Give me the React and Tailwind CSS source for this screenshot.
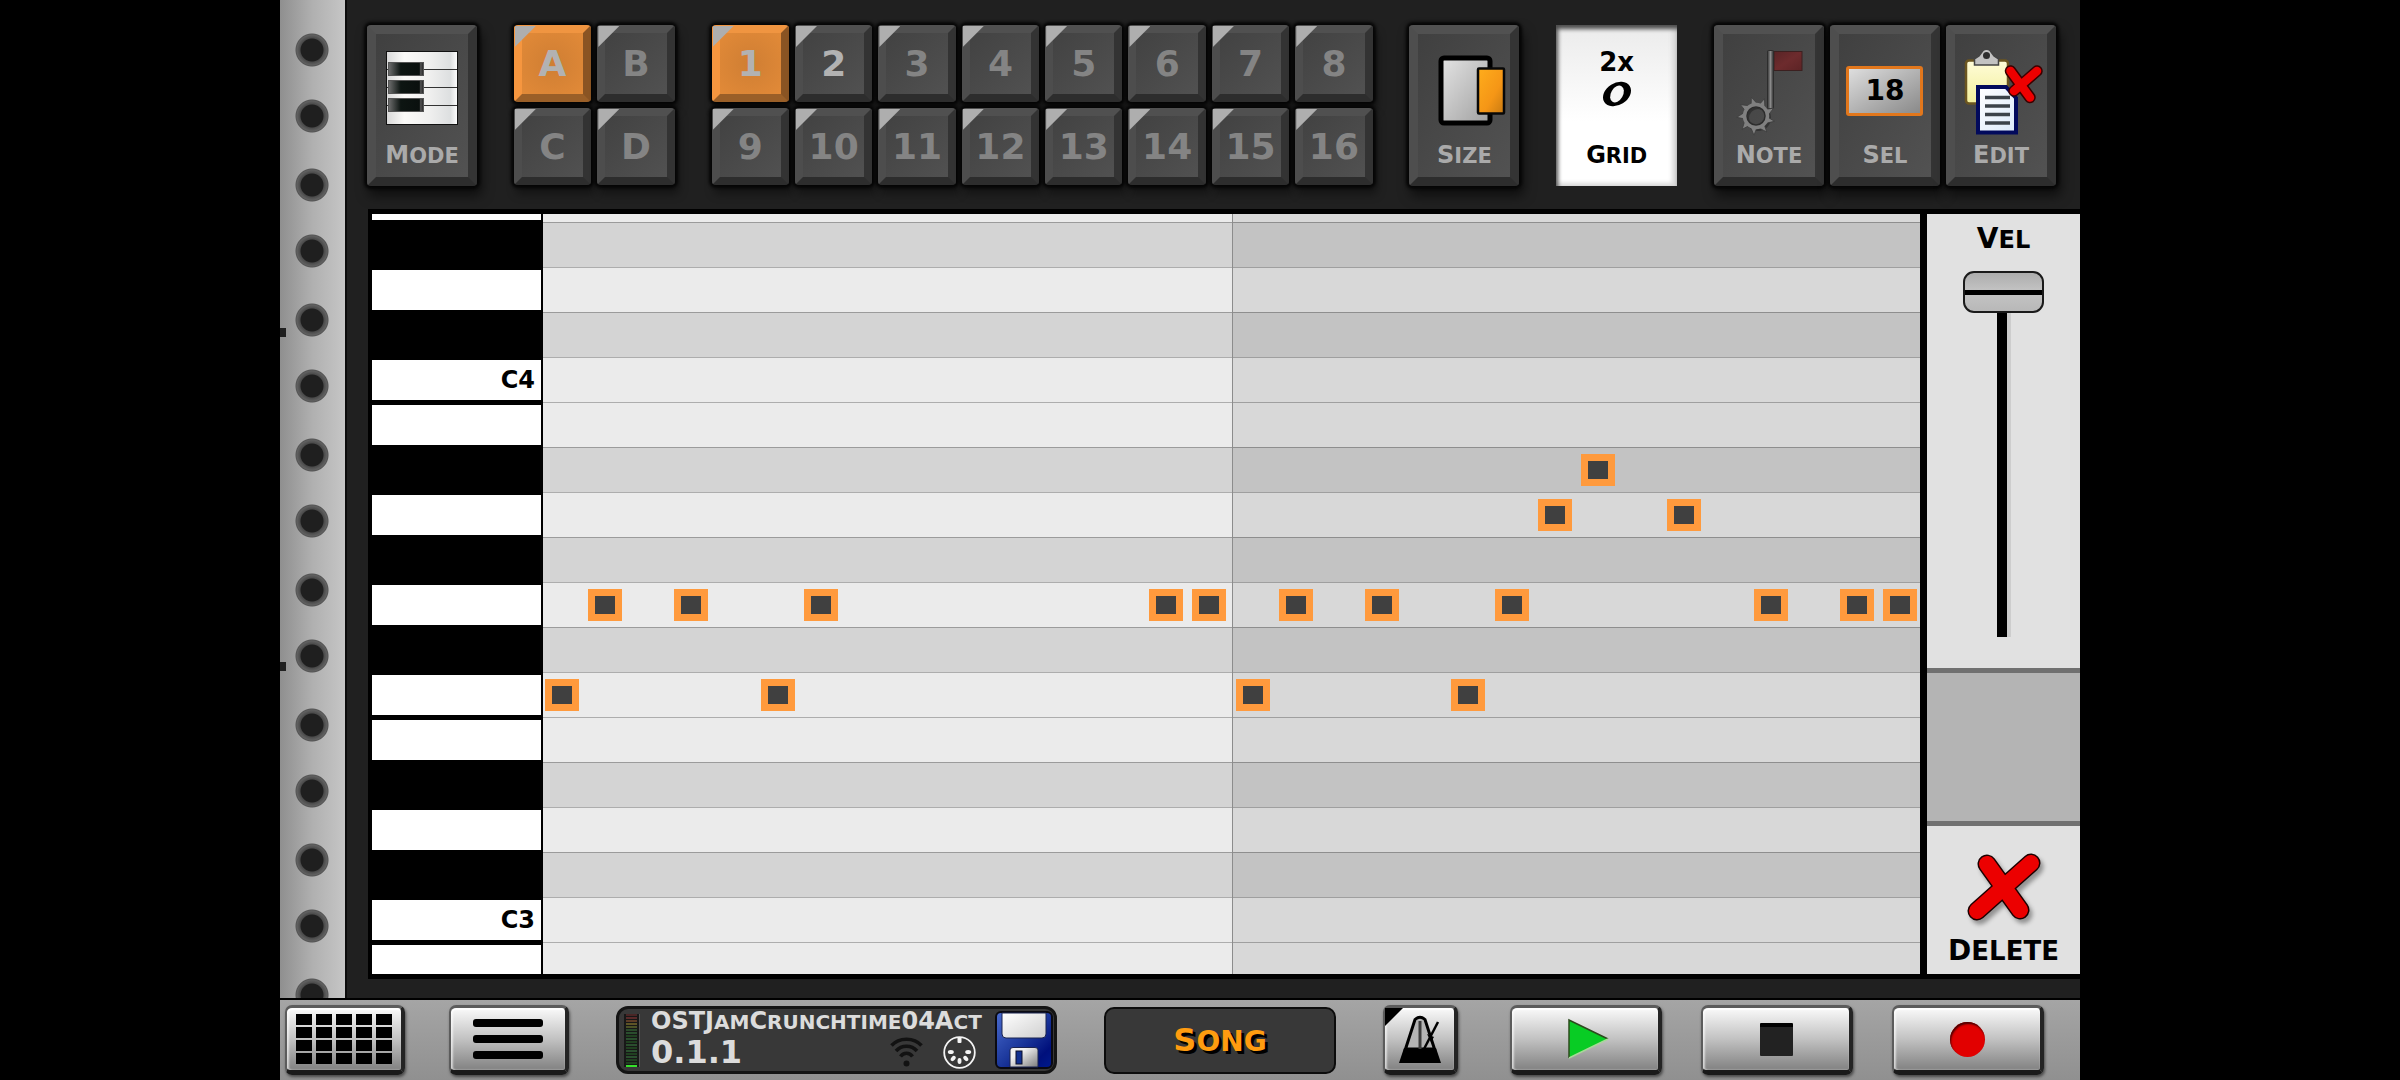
import React from "react";

/* Capitals at full size, lower-case letters as slightly smaller capitals. */
function Caps({ text, small }) {
  const runs = text.match(/[a-z]+|[^a-z]+/g) || [];
  return runs.map((run, i) =>
    /[a-z]/.test(run) ? (
      <span key={i} className={"uppercase leading-none " + small}>{run}</span>
    ) : (
      <span key={i}>{run}</span>
    )
  );
}

const BEVEL =
  "rounded-[4px] border-[9px] border-t-[#515151] border-l-[#4e4e4e] border-r-[#343434] border-b-[#2d2d2d] bg-linear-to-br from-[#404040] to-[#525252] shadow-[0_0_3px_3px_#060606,3px_8px_12px_2px_rgba(0,0,0,0.55)]";

function ToolButton({ label, children }) {
  return (
    <button type="button" className={"flex w-[110px] flex-col items-center pb-[10px] " + BEVEL}>
      <span className="flex h-[109px] w-[92px] items-center justify-center">{children}</span>
      <span className="text-[24px] leading-[24px] text-[#aaaaaa]">
        <Caps text={label} small="text-[21px]" />
      </span>
    </button>
  );
}

function Pad({ label, active, lit }) {
  const face = active
    ? "border-t-[#f09541] border-l-[#f6963f] border-r-[#8a5423] border-b-[#9a5f28] bg-[radial-gradient(circle,#cf7e33,#e28a38)]"
    : "border-t-[#505050] border-l-[#4d4d4d] border-r-[#333333] border-b-[#2d2d2d] bg-linear-to-br from-[#424242] to-[#515151]";
  const ink = active || lit ? "text-[#b2b2b2]" : "text-[#848484]";
  return (
    <button
      type="button"
      aria-pressed={!!active}
      className={
        "relative flex h-[77px] items-center justify-center rounded-[4px] border-[8px] text-[36px] leading-none shadow-[0_0_3px_3px_#060606,3px_8px_10px_1px_rgba(0,0,0,0.4)] " +
        face + " " + ink
      }
    >
      <span className="absolute -left-[7px] -top-[7px] size-[21px] bg-[#aeaeae] [clip-path:polygon(0_0,100%_0,0_100%)]" />
      {label}
    </button>
  );
}

function PianoIcon() {
  return (
    <svg width="92" height="109" viewBox="0 0 92 109" aria-hidden="true">
      <defs>
        <linearGradient id="ivory">
          <stop offset="0" stopColor="#d8d8d8" />
          <stop offset="0.25" stopColor="#fbfaf8" />
          <stop offset="0.6" stopColor="#f0f0ef" />
          <stop offset="0.9" stopColor="#dddfe0" />
          <stop offset="1" stopColor="#ffffff" />
        </linearGradient>
        <linearGradient id="ebony">
          <stop offset="0" stopColor="#6e6e6e" />
          <stop offset="0.35" stopColor="#0d1512" />
          <stop offset="0.88" stopColor="#0a100e" />
          <stop offset="0.92" stopColor="#555" />
          <stop offset="1" stopColor="#222" />
        </linearGradient>
      </defs>
      <rect x="10.5" y="17.5" width="71" height="73" fill="url(#ivory)" stroke="#111" />
      <path d="M11 35.5H81M11 53.5H81M11 71.5H81" stroke="#333" />
      {[28, 46, 64].map((y) => (
        <rect key={y} x="12.5" y={y + 0.5} width="35" height="13" fill="url(#ebony)" stroke="#555" />
      ))}
    </svg>
  );
}

function SizeIcon() {
  return (
    <svg width="92" height="109" viewBox="0 0 92 109" aria-hidden="true">
      <defs>
        <linearGradient id="sheet" x1="0" y1="0" x2="1" y2="1">
          <stop offset="0" stopColor="#e4e4e4" />
          <stop offset="1" stopColor="#a0a0a0" />
        </linearGradient>
        <linearGradient id="amber" x1="0" y1="0" x2="1" y2="1">
          <stop offset="0" stopColor="#ffad1c" />
          <stop offset="0.6" stopColor="#f59616" />
          <stop offset="1" stopColor="#c87a12" />
        </linearGradient>
      </defs>
      <rect x="23" y="24" width="49" height="65" rx="3" fill="url(#sheet)" stroke="#000" strokeWidth="5" />
      <rect x="60" y="34.5" width="26" height="45" rx="1" fill="url(#amber)" stroke="#080808" strokeWidth="2.5" />
    </svg>
  );
}

function NoteIcon() {
  const teeth = [0, 1, 2, 3, 4, 5, 6, 7, 8];
  return (
    <svg width="92" height="109" viewBox="0 0 92 109" aria-hidden="true">
      <defs>
        <linearGradient id="pole">
          <stop offset="0" stopColor="#333" />
          <stop offset="0.5" stopColor="#8a8a8a" />
          <stop offset="1" stopColor="#2c2c2c" />
        </linearGradient>
        <linearGradient id="flag" x1="0" y1="0" x2="1" y2="1">
          <stop offset="0" stopColor="#582426" />
          <stop offset="0.5" stopColor="#6d2b2d" />
          <stop offset="1" stopColor="#5c2325" />
        </linearGradient>
      </defs>
      <g transform="translate(2 2)" fill="none" stroke="#2a2a2a" opacity="0.7">
        <circle cx="33" cy="82" r="11" strokeWidth="4" />
      </g>
      <rect x="51" y="17.5" width="28" height="19" fill="url(#flag)" stroke="#3c2020" />
      <rect x="44.5" y="16.5" width="6" height="58" rx="1" fill="url(#pole)" stroke="#2d2d2d" />
      <g fill="#808080" stroke="#3a3a3a" strokeWidth="0.7">
        {teeth.map((t) => (
          <path key={t} d="M29 72L30 63L37 72Z" transform={"rotate(" + (t * 40 - 5) + " 33 82)"} />
        ))}
      </g>
      <circle cx="33" cy="82" r="11" fill="none" stroke="#808080" strokeWidth="4.5" />
      <circle cx="33" cy="82" r="9" fill="none" stroke="#2c2c2c" strokeWidth="1.5" />
    </svg>
  );
}

function EditIcon() {
  return (
    <svg width="92" height="109" viewBox="0 0 92 109" aria-hidden="true">
      <defs>
        <linearGradient id="board" x1="0" y1="0" x2="0" y2="1">
          <stop offset="0" stopColor="#fffcd8" />
          <stop offset="1" stopColor="#f2ef9c" />
        </linearGradient>
        <linearGradient id="page" x1="0" y1="0" x2="1" y2="1">
          <stop offset="0" stopColor="#ffffff" />
          <stop offset="1" stopColor="#dceafb" />
        </linearGradient>
      </defs>
      <rect x="11" y="26.5" width="42" height="43" rx="3" fill="url(#board)" stroke="#6b5520" strokeWidth="2.5" />
      <path d="M19.5 31V25L24 22L28 16.5Q31.500 14 35 16.500L39 22L43.500 25V31Z" fill="#c2c2c2" stroke="#444" strokeWidth="1.5" />
      <circle cx="31.500" cy="21.500" r="3.500" fill="#2e2e2e" />
      <path d="M23 53H51L61 64V98.500H23Z" fill="url(#page)" stroke="#020a5c" strokeWidth="4" />
      <path d="M30 63.500H55M30 72H55M30 80.500H55M30 89H55" stroke="#3c434a" strokeWidth="3.500" />
      <g strokeLinecap="round" fill="none">
        <path d="M55.500 37L75 63.500M82 37L59 57" stroke="#3a0000" strokeWidth="11.500" />
        <path d="M55.500 37L75 63.500M82 37L59 57" stroke="#ee0000" strokeWidth="8.500" />
      </g>
    </svg>
  );
}

function CrossIcon() {
  return (
    <svg width="80" height="76" viewBox="0 0 80 76" aria-hidden="true" className="drop-shadow-[3px_4px_2px_rgba(0,0,0,0.35)]">
      <g strokeLinecap="round" fill="none">
        <path d="M23 14L56 60M67 13L13 61" stroke="#1c0000" strokeWidth="19" />
        <path d="M23 14L56 60M67 13L13 61" stroke="#ec0000" strokeWidth="16" />
      </g>
    </svg>
  );
}

function SilverButton({ label, width, children }) {
  return (
    <button
      type="button"
      aria-label={label}
      className={
        "relative flex h-[70px] items-center justify-center rounded-[7px] border-t-[3px] border-r-[4px] border-b-[5px] border-l-[2px] border-t-[#5c5c5c] border-l-[#5c5c5c] border-r-[#242424] border-b-[#1a1a1a] bg-linear-to-b from-[#fafafa] via-[#c2c2c2] to-[#828282] shadow-[inset_0_2px_1px_#ffffff,inset_2px_0_2px_rgba(255,255,255,0.6),1px_2px_3px_rgba(0,0,0,0.5)] " +
        width
      }
    >
      {children}
    </button>
  );
}

/* How many 1/16 steps fit across the roll. */
const VISIBLE_STEPS = 31.9;

/* Lanes from top to bottom: pitch, key colour and the 1/16 steps with a note. */
const LANES = [
  { key: "D#4", black: true },
  { key: "D4" },
  { key: "C#4", black: true },
  { key: "C4", label: "C4" },
  { key: "B3" },
  { key: "A#3", black: true, notes: [24] },
  { key: "A3", notes: [23, 26] },
  { key: "G#3", black: true },
  { key: "G3", notes: [1, 3, 6, 14, 15, 17, 19, 22, 28, 30, 31] },
  { key: "F#3", black: true },
  { key: "F3", notes: [0, 5, 16, 21] },
  { key: "E3" },
  { key: "D#3", black: true },
  { key: "D3" },
  { key: "C#3", black: true },
  { key: "C3", label: "C3" },
];

function Keyboard() {
  return (
    <div className="w-[171px] shrink-0 border-r-2 border-black bg-black">
      <div className="mb-[2px] h-[6px] bg-white" />
      {LANES.map((lane) =>
        lane.black ? (
          <button key={lane.key} type="button" aria-label={lane.key} className="block h-[45px] w-full bg-black" />
        ) : (
          <div key={lane.key} className="h-[45px] pt-[3px]">
            <button
              type="button"
              aria-label={lane.key}
              className="flex h-[40px] w-full items-center justify-end bg-white pr-[6px] text-[24px] leading-none text-black"
            >
              {lane.label}
            </button>
          </div>
        )
      )}
      <div className="h-[32px] pt-[3px]">
        <div className="h-full bg-white" />
      </div>
    </div>
  );
}

function Roll() {
  return (
    <div className="relative min-w-0 flex-1">
      <div className="h-[8px] bg-[#ebebeb]" />
      {LANES.map((lane) => (
        <div
          key={lane.key}
          className={
            "relative h-[45px] border-t " +
            (lane.black ? "border-[#9b9b9b] bg-[#d4d4d4]" : "border-[#adadad] bg-[#ebebeb]")
          }
        >
          {(lane.notes || []).map((step) => (
            <span
              key={step}
              className="absolute top-[6px] z-10 ml-[2px] h-[32px] w-[34px] border-[7px] border-[#ff9a3d] bg-[#404040]"
              style={{ left: (step / VISIBLE_STEPS) * 100 + "%" }}
            />
          ))}
        </div>
      ))}
      <div className="h-[32px] border-t border-[#adadad] bg-[#ebebeb]" />
      <div className="absolute inset-y-0 right-0 w-1/2 border-l border-[#8c8c8c] bg-black/8" />
    </div>
  );
}

function SidePanel() {
  return (
    <div className="flex w-[153px] shrink-0 flex-col">
      <div className="flex flex-1 flex-col items-center bg-[#e1e1e1] pt-[10px]">
        <label htmlFor="velocity" className="text-[28px] leading-[30px] text-black">
          <Caps text="Vel" small="text-[24px]" />
        </label>
        <input
          id="velocity"
          type="range"
          min="0"
          max="127"
          defaultValue="127"
          className="mt-[17px] h-[366px] w-[81px] appearance-none bg-transparent bg-[linear-gradient(to_right,transparent_34px,#000_34px,#000_44px,#cdcdcd_44px,#cdcdcd_48px,transparent_48px)] [direction:rtl] [writing-mode:vertical-lr] [&::-webkit-slider-thumb]:h-[42px] [&::-webkit-slider-thumb]:w-[81px] [&::-webkit-slider-thumb]:appearance-none [&::-webkit-slider-thumb]:rounded-[11px] [&::-webkit-slider-thumb]:border-2 [&::-webkit-slider-thumb]:border-[#1a1a1a] [&::-webkit-slider-thumb]:bg-[linear-gradient(to_bottom,#adadad,#c2c2c2_17px,#000_17px,#000_22px,#c2c2c2_22px,#b8b8b8)]"
        />
      </div>
      <div className="h-[158px] border-y-[5px] border-[#707070] bg-[#b4b4b4]" />
      <button type="button" className="flex h-[148px] flex-col items-center justify-end bg-[#e1e1e1] pb-[8px]">
        <CrossIcon />
        <span className="mt-[10px] text-[28px] leading-[30px] text-black">
          <Caps text="Delete" small="text-[26px]" />
        </span>
      </button>
    </div>
  );
}

function Meter() {
  const colors = [
    "bg-[#4a2626]", "bg-[#5a2a2a]", "bg-[#5c3c26]", "bg-[#5e5426]", "bg-[#4c5226]", "bg-[#2a4a2a]",
    "bg-[#2a4e2e]", "bg-[#204020]", "bg-[#2a4e2e]", "bg-[#204020]", "bg-[#2a4e2e]", "bg-[#204020]",
    "bg-[#2a4e2e]", "bg-[#204020]", "bg-[#2a4e2e]", "bg-[#204020]", "bg-[#204020]", "bg-[#35e02a]",
  ];
  return (
    <div className="flex w-[16px] shrink-0 flex-col gap-px border-r border-[#555555] bg-[#181818] px-[2px]">
      {colors.map((c, i) => (
        <span key={i} className={"h-[2px] " + c} />
      ))}
    </div>
  );
}

function WifiIcon() {
  return (
    <svg width="33" height="32" viewBox="0 0 33 32" role="img" aria-label="Wi-Fi">
      <g fill="none" stroke="#121212" strokeWidth="3.500">
        <path d="M1.500 9.500C9 1 24 1 31.500 9.500" />
        <path d="M6 15C11.500 8.500 21.500 8.500 27 15" />
        <path d="M10.500 20.500C13.500 16 19.500 16 22.500 20.500" />
      </g>
      <circle cx="16.500" cy="27.500" r="3" fill="#121212" />
    </svg>
  );
}

function MidiIcon() {
  return (
    <svg width="33" height="33" viewBox="0 0 33 33" role="img" aria-label="MIDI">
      <circle cx="16.500" cy="16.500" r="15.300" fill="none" stroke="#f4f4f4" strokeWidth="1.800" />
      <g fill="#f4f4f4">
        <rect x="14.500" y="1" width="4" height="6" rx="1" />
        <ellipse cx="7.800" cy="16" rx="3" ry="2" />
        <ellipse cx="25.200" cy="16" rx="3" ry="2" />
        <ellipse cx="10.200" cy="22.500" rx="3" ry="2" transform="rotate(-50 10.200 22.500)" />
        <ellipse cx="22.800" cy="22.500" rx="3" ry="2" transform="rotate(50 22.800 22.500)" />
        <ellipse cx="16.500" cy="25" rx="2" ry="3" />
      </g>
    </svg>
  );
}

function FloppyIcon() {
  return (
    <svg width="58" height="58" viewBox="0 0 58 58" aria-hidden="true">
      <defs>
        <linearGradient id="disk" x1="0" y1="0" x2="1" y2="1">
          <stop offset="0" stopColor="#4a6cd0" />
          <stop offset="0.5" stopColor="#1c389c" />
          <stop offset="0.8" stopColor="#00107c" />
          <stop offset="1" stopColor="#001a8c" />
        </linearGradient>
        <linearGradient id="shutter" x1="0" y1="0" x2="1" y2="1">
          <stop offset="0.3" stopColor="#f2f2f2" />
          <stop offset="1" stopColor="#7c7c7c" />
        </linearGradient>
        <linearGradient id="paper" x1="0" y1="0" x2="1" y2="1">
          <stop offset="0" stopColor="#ffffff" />
          <stop offset="1" stopColor="#cfcfcf" />
        </linearGradient>
      </defs>
      <rect x="1" y="1" width="56" height="56" rx="5" fill="url(#disk)" stroke="#0a0a12" strokeWidth="2" />
      <path d="M7 2H51V23Q51 27 47 27H11Q7 27 7 23Z" fill="url(#paper)" stroke="#1b2450" />
      <path d="M15 56V39Q15 36.500 18 36.500H40Q43 36.500 43 39V56Z" fill="url(#shutter)" stroke="#1b2450" />
      <rect x="21" y="40" width="6" height="13" fill="#123090" stroke="#0a0f2a" />
    </svg>
  );
}

function BottomBar() {
  return (
    <div className="flex items-center justify-between border-t-2 border-black bg-linear-to-b from-[#a5a5a5] to-[#909090] py-[5px] pl-[5px] pr-[36px]">
      <div className="flex items-center gap-[47px]">
        <div className="flex gap-[44px]">
          <SilverButton label="Machine view" width="w-[120px]">
            <span className="grid grid-cols-5 gap-x-[4px] gap-y-[2px]">
              {Array.from({ length: 20 }, (_, i) => (
                <span key={i} className="h-[11px] w-[16px] bg-black" />
              ))}
            </span>
          </SilverButton>
          <SilverButton label="Menu" width="w-[120px]">
            <span className="flex flex-col gap-[8px]">
              <span className="h-[8px] w-[70px] rounded-[3px] bg-black" />
              <span className="h-[8px] w-[70px] rounded-[3px] bg-black" />
              <span className="h-[8px] w-[70px] rounded-[3px] bg-black" />
            </span>
          </SilverButton>
        </div>

        <div className="flex h-[68px] w-[441px] items-center rounded-[12px] border-[3px] border-[#141414] bg-[#383838] pl-[5px] pr-[1px]">
          <Meter />
          <div className="ml-[11px] min-w-0 flex-1">
            <div className="whitespace-nowrap text-[24px] leading-[24px] text-[#dcdcdc]">
              <Caps text="OSTJamCrunchtime04Act" small="text-[20px]" />
            </div>
            <div className="flex items-center pr-[19px] text-[#dcdcdc]">
              <span className="flex-1 text-[32px] leading-[38px]">0.1.1</span>
              <WifiIcon />
              <span className="ml-[20px]"><MidiIcon /></span>
            </div>
          </div>
          <button type="button" aria-label="Save" className="shrink-0">
            <FloppyIcon />
          </button>
        </div>

        <button
          type="button"
          className="h-[67px] w-[232px] rounded-[10px] border-2 border-[#0c0c0c] bg-[#383838] text-[32px] leading-none text-[#ff9c10] [text-shadow:3px_3px_0_#000]"
        >
          <Caps text="Song" small="text-[28px]" />
        </button>

        <SilverButton label="Metronome" width="w-[75px]">
          <span className="absolute left-0 top-0 size-[18px] bg-black [clip-path:polygon(0_0,100%_0,0_100%)]" />
          <svg width="42" height="48" viewBox="0 0 42 48" aria-hidden="true">
            <path d="M6.500 34L16 4.500Q21 0 26 4.500L35.500 34Z" fill="#b4b4b4" stroke="#000" strokeWidth="3" />
            <path d="M5 33H37L42 48H0Z" fill="#000" />
            <path d="M21 6V34" stroke="#3c3c3c" strokeWidth="3" />
            <path d="M25 34L39 7" stroke="#000" strokeWidth="2.500" />
            <path d="M28 19L35 22L32 27Z" fill="#000" />
          </svg>
        </SilverButton>
      </div>

      <div className="flex gap-[39px]">
        <SilverButton label="Play" width="w-[152px]">
          <svg width="44" height="42" viewBox="0 0 44 42" aria-hidden="true" className="ml-[4px]">
            <path d="M4 2V40L43 21Z" fill="#08cc24" />
            <path d="M4 40V2L43 21" fill="none" stroke="#2c4a1c" strokeWidth="1.500" />
            <path d="M4 40L43 21" stroke="#a8d898" strokeWidth="1.500" />
          </svg>
        </SilverButton>
        <SilverButton label="Stop" width="w-[152px]">
          <span className="size-[33px] rounded-[1px] border-t-4 border-black bg-[#222222]" />
        </SilverButton>
        <SilverButton label="Record" width="w-[152px]">
          <span className="size-[35px] rounded-full bg-[#e20000] shadow-[inset_1px_2px_2px_#4a0000]" />
        </SilverButton>
      </div>
    </div>
  );
}

export default function App() {
  return (
    <div className="flex min-h-screen bg-black pl-[280px] pr-[320px] font-['DejaVu_Sans','Liberation_Sans',sans-serif] font-bold">
      <div className="flex min-w-0 flex-1 flex-col">
        <div className="flex flex-1">
          <div className="relative w-[67px] shrink-0 border-r-2 border-[#0c0c0c] bg-linear-to-r from-[#8f8f8f] via-[#b0b0b0] to-[#c6c6c6]">
            <div className="h-full [background:radial-gradient(circle_at_32px_50px,#1f1f1f_11px,#4a4a4a_12px,#606060_15px,#555555_16px,transparent_17px)_0_0/65px_135px,radial-gradient(circle_at_32px_116px,#1f1f1f_11px,#4a4a4a_12px,#606060_15px,#555555_16px,transparent_17px)_0_0/65px_135px]" />
            <span className="absolute left-0 top-[328px] h-[9px] w-[6px] bg-[#202020]" />
            <span className="absolute left-0 top-[662px] h-[9px] w-[6px] bg-[#202020]" />
          </div>

          <div className="flex min-w-0 flex-1 flex-col bg-[#202020] pb-[19px]">
            <div className="flex justify-between pb-[23px] pl-[20px] pr-[24px] pt-[25px]">
              <ToolButton label="Mode"><PianoIcon /></ToolButton>
              <div className="grid w-[161px] grid-cols-2 content-start gap-[6px]">
                <Pad label="A" active />
                <Pad label="B" />
                <Pad label="C" />
                <Pad label="D" />
              </div>
              <div className="grid w-[661px] grid-cols-8 content-start gap-[6px]">
                {Array.from({ length: 16 }, (_, i) => (
                  <Pad key={i} label={String(i + 1)} active={i === 0} lit={i === 1} />
                ))}
              </div>
              <ToolButton label="Size"><SizeIcon /></ToolButton>
              <button
                type="button"
                className="flex w-[121px] flex-col items-center bg-linear-to-b from-[#ebebeb] to-white to-60% pb-[19px] pt-[25px] text-[24px] leading-[24px] text-black shadow-[inset_2px_4px_4px_#4a4a4a,inset_-7px_-5px_4px_-2px_#dadada]"
              >
                <span className="text-[26px]">2x</span>
                <svg width="32" height="28" viewBox="0 0 32 28" aria-hidden="true" className="mt-[6px]">
                  <ellipse cx="16" cy="14" rx="15" ry="11" transform="rotate(-32 16 14)" fill="#000" />
                  <ellipse cx="16" cy="14" rx="9" ry="6" transform="rotate(-60 16 14)" fill="#f6f6f6" />
                </svg>
                <span className="mt-auto"><Caps text="Grid" small="text-[21px]" /></span>
              </button>
              <div className="flex gap-[6px]">
                <ToolButton label="Note"><NoteIcon /></ToolButton>
                <ToolButton label="Sel">
                  <span className="mt-[5px] flex h-[50px] w-[77px] items-center justify-center rounded-[3px] border-[3px] border-[#e2771c] bg-linear-to-br from-[#dedede] to-[#8a8a8a] text-[28px] leading-none text-black">
                    18
                  </span>
                </ToolButton>
                <ToolButton label="Edit"><EditIcon /></ToolButton>
              </div>
            </div>

            <div className="relative ml-[21px] flex border-y-[5px] border-l-4 border-black">
              <Keyboard />
              <Roll />
              <div className="w-[7px] shrink-0 bg-black" />
              <SidePanel />
            </div>
          </div>
        </div>
        <BottomBar />
      </div>
    </div>
  );
}
